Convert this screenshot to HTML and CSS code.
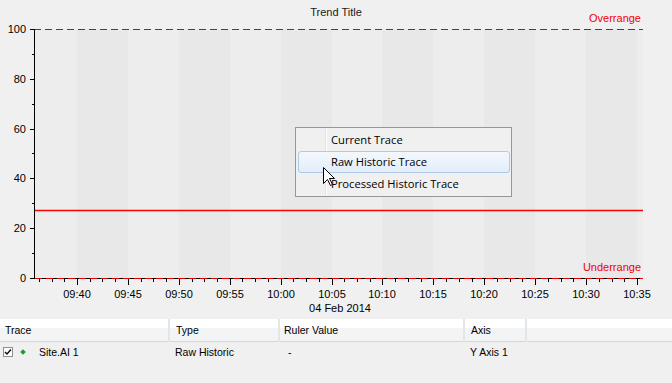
FILE: index.html
```html
<!DOCTYPE html>
<html>
<head>
<meta charset="utf-8">
<title>Trend</title>
<link rel="stylesheet" href="styles.css">
</head>
<body>
<div class="trend">
  <svg class="chart" width="672" height="319" viewBox="0 0 672 319">
    <text class="title" x="336" y="16" text-anchor="middle">Trend Title</text>
    <text class="range" x="641" y="22" text-anchor="end">Overrange</text>

    <rect class="band-l" x="34" y="29" width="609" height="249"/>
    <rect class="band-d" x="77" y="29" width="51" height="249"/>
    <rect class="band-d" x="179" y="29" width="51" height="249"/>
    <rect class="band-d" x="281" y="29" width="51" height="249"/>
    <rect class="band-d" x="382" y="29" width="51" height="249"/>
    <rect class="band-d" x="484" y="29" width="51" height="249"/>
    <rect class="band-d" x="586" y="29" width="51" height="249"/>

    <line class="limit" x1="34" y1="29.5" x2="643" y2="29.5"/>
    <line class="trace" x1="34" y1="210.5" x2="643" y2="210.5"/>

    <path class="axis" d="M34.5 29 V279 M30 29.5 H34 M30 79.5 H34 M30 129.5 H34 M30 178.5 H34 M30 228.5 H34 M30 278.5 H34 M32 54.5 H34 M32 104.5 H34 M32 153.5 H34 M32 203.5 H34 M32 253.5 H34"/>
    <path class="axis" d="M34 278.5 H643
      M39.5 278 V282 M52.5 278 V282 M64.5 278 V282 M77.5 278 V285
      M90.5 278 V282 M102.5 278 V282 M115.5 278 V282 M128.5 278 V285
      M141.5 278 V282 M153.5 278 V282 M166.5 278 V282 M179.5 278 V285
      M192.5 278 V282 M204.5 278 V282 M217.5 278 V282 M230.5 278 V285
      M242.5 278 V282 M255.5 278 V282 M268.5 278 V282 M281.5 278 V285
      M293.5 278 V282 M306.5 278 V282 M319.5 278 V282 M332.5 278 V285
      M344.5 278 V282 M357.5 278 V282 M370.5 278 V282 M382.5 278 V285
      M395.5 278 V282 M408.5 278 V282 M421.5 278 V282 M433.5 278 V285
      M446.5 278 V282 M459.5 278 V282 M472.5 278 V282 M484.5 278 V285
      M497.5 278 V282 M510.5 278 V282 M522.5 278 V282 M535.5 278 V285
      M548.5 278 V282 M561.5 278 V282 M573.5 278 V282 M586.5 278 V285
      M599.5 278 V282 M612.5 278 V282 M624.5 278 V282 M637.5 278 V285"/>
    <line class="limit" x1="35" y1="278.5" x2="643" y2="278.5"/>

    <text class="range" x="641" y="271" text-anchor="end">Underrange</text>

    <g class="ylabels" text-anchor="end">
      <text x="26" y="33">100</text>
      <text x="26" y="83">80</text>
      <text x="26" y="133">60</text>
      <text x="26" y="182">40</text>
      <text x="26" y="232">20</text>
      <text x="26" y="282">0</text>
    </g>
    <g class="xlabels" text-anchor="middle">
      <text x="77" y="298">09:40</text>
      <text x="128" y="298">09:45</text>
      <text x="179" y="298">09:50</text>
      <text x="230" y="298">09:55</text>
      <text x="281" y="298">10:00</text>
      <text x="332" y="298">10:05</text>
      <text x="382" y="298">10:10</text>
      <text x="433" y="298">10:15</text>
      <text x="484" y="298">10:20</text>
      <text x="535" y="298">10:25</text>
      <text x="586" y="298">10:30</text>
      <text x="637" y="298">10:35</text>
      <text x="340" y="312">04 Feb 2014</text>
    </g>
  </svg>

  <div class="menu">
    <div class="menu-item">Current Trace</div>
    <div class="menu-item is-hot">Raw Historic Trace</div>
    <div class="menu-item">Processed Historic Trace</div>
  </div>

  <svg class="cursor" width="13" height="20" viewBox="0 0 13 20">
    <path d="M0.5 0.5 L0.5 16.5 L4.5 12.5 L7.5 18.5 L9.5 17.5 L6.5 11.5 L11.5 11.5 Z"/>
  </svg>
</div>

<table class="legend">
  <colgroup>
    <col class="c-trace"><col class="c-type"><col class="c-ruler"><col class="c-axis"><col>
  </colgroup>
  <thead>
    <tr>
      <th class="first">Trace</th>
      <th>Type</th>
      <th class="ruler">Ruler Value</th>
      <th>Axis</th>
      <th class="last"></th>
    </tr>
  </thead>
  <tbody>
    <tr>
      <td class="first">
        <span class="trace-cell">
          <span class="check"><svg width="8" height="8" viewBox="0 0 8 8"><path d="M1 4 L3 6 L7 1.5"/></svg></span>
          <span class="marker"></span>
          <span>Site.AI 1</span>
        </span>
      </td>
      <td>Raw Historic</td>
      <td class="ruler-val">-</td>
      <td>Y Axis 1</td>
      <td></td>
    </tr>
  </tbody>
</table>
</body>
</html>
```
FILE: styles.css
```css
html, body {
  margin: 0;
  padding: 0;
  background: #f0f0f0;
  width: 672px;
  height: 383px;
  overflow: hidden;
}

.trend {
  position: relative;
  height: 319px;
}

.chart {
  display: block;
  font-family: "Liberation Sans", Arial, sans-serif;
  font-size: 11px;
}

.title { fill: #1a1a22; }
.range { fill: #f00000; }
.band-l { fill: #ededed; }
.band-d { fill: #e8e8e8; }

.limit {
  stroke: #e80000;
  stroke-width: 1;
  stroke-dasharray: 7 4;
}

.trace {
  stroke: #ff0000;
  stroke-width: 1.6;
}

.axis {
  fill: none;
  stroke: #000;
  stroke-width: 1;
}

.ylabels text, .xlabels text { fill: #000; }

.menu {
  position: absolute;
  left: 295px;
  top: 127px;
  width: 217px;
  height: 70px;
  box-sizing: border-box;
  border: 1px solid #979797;
  background: #f0f0f0;
  padding: 1px 1px 1px 2px;
  font-family: "Open Sans", "Segoe UI", sans-serif;
  font-size: 11.2px;
  color: #000;
}

.menu::before {
  content: "";
  position: absolute;
  left: 29px;
  top: 1px;
  bottom: 1px;
  width: 1px;
  background: #e2e3e3;
  box-shadow: 1px 0 0 #ffffff;
}

.menu-item {
  position: relative;
  height: 22px;
  line-height: 19px;
  padding-left: 32px;
  box-sizing: border-box;
  border: 1px solid transparent;
  border-radius: 3px;
  white-space: nowrap;
}

.menu-item.is-hot {
  border-color: #aecbe9;
  background: linear-gradient(#f4f8fd, #e2edf9);
}

.cursor {
  position: absolute;
  left: 323px;
  top: 167px;
}

.cursor path {
  fill: #fff;
  stroke: #000;
  stroke-width: 1;
  stroke-linejoin: miter;
}

.legend {
  width: 672px;
  table-layout: fixed;
  border-collapse: collapse;
  font-family: "Liberation Sans", Arial, sans-serif;
  font-size: 10.5px;
  color: #000;
}

.c-trace { width: 169px; }
.c-type { width: 110px; }
.c-ruler { width: 185px; }
.c-axis { width: 62px; }

.legend th {
  height: 22px;
  box-sizing: border-box;
  padding: 0 0 0 6px;
  text-align: left;
  font-weight: normal;
  background: linear-gradient(#ffffff 0, #ffffff 42%, #f3f4f6 42%, #f3f4f6 100%);
  border-bottom: 1px solid #d6d6d6;
  border-right: 2px solid #e4e5e7;
}

.legend th.last { border-right: none; }
.legend th.first { padding-left: 5px; }
.legend th.ruler { padding-left: 4px; }

.legend td {
  height: 21px;
  padding: 0 0 0 6px;
  white-space: nowrap;
}

.legend td.first { padding-left: 3px; }
.legend td.ruler-val { padding-left: 9px; }

.trace-cell {
  display: flex;
  align-items: center;
}

.check {
  width: 10px;
  height: 10px;
  box-sizing: border-box;
  border: 1px solid #8e8f8f;
  background: #fff;
  display: flex;
  align-items: center;
  justify-content: center;
}

.check svg path {
  fill: none;
  stroke: #111;
  stroke-width: 1.5;
}

.marker {
  width: 4px;
  height: 4px;
  margin-left: 8px;
  margin-right: 14px;
  background: #1f9a2c;
  transform: rotate(45deg);
}
```
